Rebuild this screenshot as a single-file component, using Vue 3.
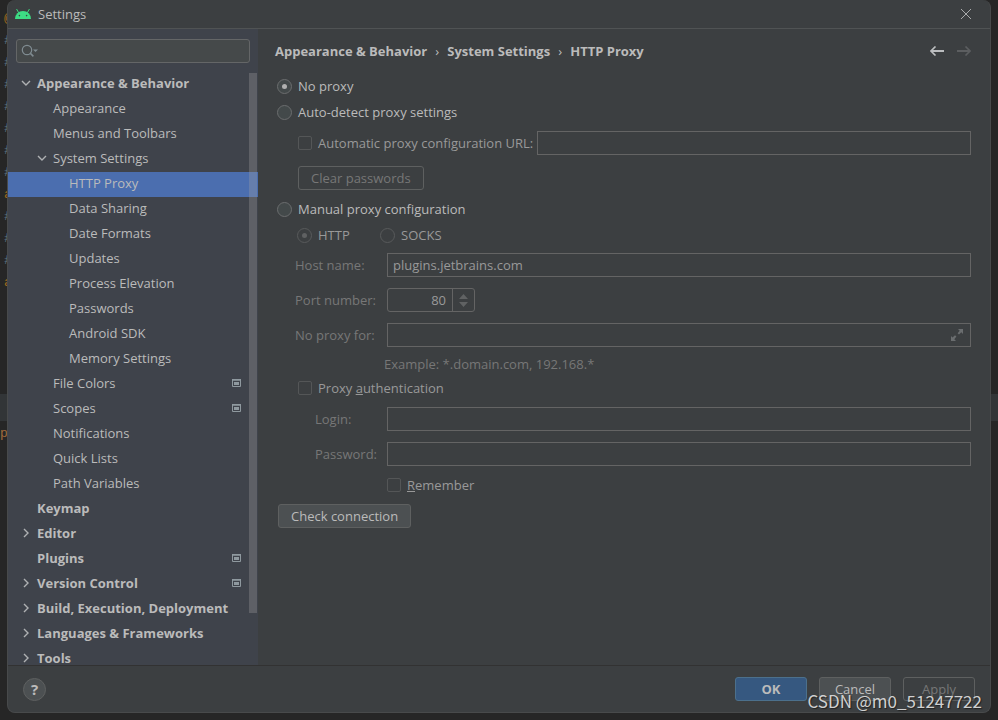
<script setup>
import { ref } from 'vue'

const tree = [
  { label: 'Appearance & Behavior', level: 0, state: 'open' },
  { label: 'Appearance', level: 1 },
  { label: 'Menus and Toolbars', level: 1 },
  { label: 'System Settings', level: 1, state: 'open' },
  { label: 'HTTP Proxy', level: 2, selected: true },
  { label: 'Data Sharing', level: 2 },
  { label: 'Date Formats', level: 2 },
  { label: 'Updates', level: 2 },
  { label: 'Process Elevation', level: 2 },
  { label: 'Passwords', level: 2 },
  { label: 'Android SDK', level: 2 },
  { label: 'Memory Settings', level: 2 },
  { label: 'File Colors', level: 1, project: true },
  { label: 'Scopes', level: 1, project: true },
  { label: 'Notifications', level: 1 },
  { label: 'Quick Lists', level: 1 },
  { label: 'Path Variables', level: 1 },
  { label: 'Keymap', level: 0 },
  { label: 'Editor', level: 0, state: 'closed' },
  { label: 'Plugins', level: 0, project: true },
  { label: 'Version Control', level: 0, state: 'closed', project: true },
  { label: 'Build, Execution, Deployment', level: 0, state: 'closed' },
  { label: 'Languages & Frameworks', level: 0, state: 'closed' },
  { label: 'Tools', level: 0, state: 'closed' }
]

const editorLines = ['@', '#', '#', '#', '#', '#', '#', '#', 'a', '#', '#', '#', 'a']
const mode = ref('none')
const scheme = ref('http')
const host = ref('plugins.jetbrains.com')
const port = ref('80')
</script>

<template>
  <div class="screen">
    <div class="editor" aria-hidden="true">
      <div v-for="(c, i) in editorLines" :key="i" class="line" :class="{ word: c !== '#' }">{{ c }}</div>
      <div class="band"></div>
      <div class="line prompt">pi</div>
    </div>

    <section class="dialog">
      <header class="titlebar">
        <svg class="android" width="18" height="12" viewBox="0 0 18 12">
          <path d="M1 11a8 8 0 0 1 16 0z" fill="#3ddc84" />
          <path d="M4.6 4.6 2.8 1.4M13.4 4.6l1.8-3.2" stroke="#3ddc84" stroke-width="1" stroke-linecap="round" />
          <circle cx="5.4" cy="7.6" r=".8" fill="#3c3f41" /><circle cx="12.6" cy="7.6" r=".8" fill="#3c3f41" />
        </svg>
        <h1>Settings</h1>
        <button class="icon-button" aria-label="Close">
          <svg width="12" height="12" viewBox="0 0 12 12"><path d="M1 1l10 10M11 1L1 11" stroke="#a9abac" stroke-width="1" /></svg>
        </button>
      </header>

      <div class="body">
        <aside class="sidebar">
          <div class="search">
            <svg width="18" height="14" viewBox="0 0 18 14" fill="none">
              <circle cx="6" cy="6" r="4.7" stroke="#7f8b91" stroke-width="1.2" />
              <path d="M9.4 9.4l3 3" stroke="#7f8b91" stroke-width="1.5" />
              <path d="M12 5.5h5L14.500 8z" fill="#7f8b91" />
            </svg>
            <input type="text" aria-label="Search settings" />
          </div>
          <nav class="tree">
            <a
              v-for="item in tree"
              :key="item.label"
              href="#"
              class="node"
              :class="['level-' + item.level, { selected: item.selected }]"
            >
              <span class="arrow">
                <svg v-if="item.state === 'open'" width="10" height="10" viewBox="0 0 10 10" fill="none"><path d="M1 3l4 4 4-4" stroke="#afb1b3" stroke-width="1.4" /></svg>
                <svg v-if="item.state === 'closed'" width="10" height="10" viewBox="0 0 10 10" fill="none"><path d="M3 1l4 4-4 4" stroke="#afb1b3" stroke-width="1.4" /></svg>
              </span>
              <span class="name">{{ item.label }}</span>
              <svg v-if="item.project" width="9" height="8" viewBox="0 0 9 8">
                <path d="M.5 1v6.500h8V1z" fill="none" stroke="#8f999f" />
                <path d="M0 0h9v1.500H0zM2 3h5v3H2z" fill="#8f999f" />
              </svg>
            </a>
            <div class="scroll-thumb"></div>
          </nav>
        </aside>

        <main class="content">
          <div class="heading">
            <h2>Appearance &amp; Behavior</h2><span class="sep">›</span>
            <h2>System Settings</h2><span class="sep">›</span>
            <h2>HTTP Proxy</h2>
            <div class="history">
              <button class="icon-button" aria-label="Back">
                <svg width="14" height="10" viewBox="0 0 14 10" fill="none"><path d="M14 5H2" stroke="#bbbdbf" stroke-width="2" /><path d="M5.500.5L1 5l4.500 4.500" stroke="#bbbdbf" stroke-width="1.600" /></svg>
              </button>
              <button class="icon-button" aria-label="Forward" disabled>
                <svg width="14" height="10" viewBox="0 0 14 10" fill="none"><path d="M0 5h12" stroke="#5c5e60" stroke-width="2" /><path d="M8.500.5L13 5 8.500 9.500" stroke="#5c5e60" stroke-width="1.600" /></svg>
              </button>
            </div>
          </div>

          <form class="form" @submit.prevent>
            <label class="choice"><input v-model="mode" type="radio" name="mode" value="none" />No proxy</label>
            <label class="choice"><input v-model="mode" type="radio" name="mode" value="auto" />Auto-detect proxy settings</label>
            <div class="field nested after-choice">
              <label class="option url-option"><input type="checkbox" disabled />Automatic proxy configuration URL:</label>
              <input type="text" class="box" aria-label="Configuration URL" disabled />
            </div>
            <div class="field nested">
              <button class="button" disabled>Clear passwords</button>
            </div>
            <label class="choice after-field"><input v-model="mode" type="radio" name="mode" value="manual" />Manual proxy configuration</label>
            <div class="schemes">
              <label class="choice"><input v-model="scheme" type="radio" name="scheme" value="http" disabled />HTTP</label>
              <label class="choice"><input v-model="scheme" type="radio" name="scheme" value="socks" disabled />SOCKS</label>
            </div>
            <div class="field after-choice">
              <label class="caption" for="host">Host name:</label>
              <input id="host" v-model="host" type="text" class="box" disabled />
            </div>
            <div class="field">
              <label class="caption" for="port">Port number:</label>
              <div class="spinner">
                <input id="port" v-model="port" type="text" disabled />
                <span class="steps">
                  <svg width="9" height="13" viewBox="0 0 9 13"><path d="M0 5l4.500-5L9 5zM0 8h9l-4.500 5z" fill="#606263" /></svg>
                </span>
              </div>
            </div>
            <div class="field">
              <label class="caption" for="bypass">No proxy for:</label>
              <div class="box expandable">
                <input id="bypass" type="text" disabled />
                <svg width="12" height="12" viewBox="0 0 12 12"><path d="M7 0h5v5l-1.700-1.700L8 5.600 6.600 4.200 8.700 1.700zM0 7l1.500 1.500L4 6.200 5.400 7.600 3.300 10.300 5 12H0z" fill="#6a6d6f" /></svg>
              </div>
            </div>
            <p class="hint">Example: *.domain.com, 192.168.*</p>
            <div class="nested auth">
              <label class="option"><input type="checkbox" disabled /><span>Proxy <u>a</u>uthentication</span></label>
            </div>
            <div class="field deep after-field">
              <label class="caption" for="login">Login:</label>
              <input id="login" type="text" class="box" disabled />
            </div>
            <div class="field deep">
              <label class="caption" for="password">Password:</label>
              <input id="password" type="password" class="box" disabled />
            </div>
            <div class="remember after-field">
              <label class="option"><input type="checkbox" disabled /><span><u>R</u>emember</span></label>
            </div>
            <div class="check after-field"><button class="button">Check connection</button></div>
          </form>
        </main>
      </div>

      <footer class="footer">
        <button class="help" aria-label="Help">?</button>
        <button class="button primary">OK</button>
        <button class="button">Cancel</button>
        <button class="button" disabled>Apply</button>
      </footer>
    </section>
    <div class="watermark">CSDN @m0_51247722</div>
  </div>
</template>

<style>
body {
  background: #262626;
}
</style>

<style scoped>
* {
  box-sizing: border-box;
}
.screen {
  position: relative;
  display: flex;
  height: 100vh;
  min-height: 560px;
  padding: 0 7px 7px;
  overflow: hidden;
  background: #262626;
  color: #bbbbbb;
  font: 13px/18px "Open Sans", "Noto Sans", sans-serif;
}
.editor {
  position: absolute;
  inset: 0;
  padding-top: 8px;
  font: 13px/22px "Liberation Mono", monospace;
  color: #5f7381;
}
.line {
  padding-left: 4px;
}
.line.word {
  color: #a06c1f;
}
.band {
  height: 27px;
  margin-top: 100px;
  background: #323537;
}
.line.prompt {
  padding-left: 0;
  color: #a06c3c;
  line-height: 26px;
}
.dialog {
  position: relative;
  display: flex;
  flex: 1;
  flex-direction: column;
  min-width: 0;
  border: 1px solid #484a4b;
  border-top: 0;
  border-radius: 8px;
  overflow: hidden;
  background: #3c3f41;
}
h1,
h2,
p {
  margin: 0;
  font-size: 13px;
  font-weight: 400;
}
input,
button {
  margin: 0;
  padding: 0;
  border: 0;
  background: none;
  color: inherit;
  font: inherit;
}
input[type="text"],
input[type="password"] {
  min-width: 0;
  outline: 0;
}
.titlebar {
  display: flex;
  align-items: center;
  flex: none;
  gap: 6px;
  height: 29px;
  padding: 0 18px 0 6px;
  border-bottom: 1px solid #505354;
}
.titlebar h1 {
  flex: 1;
}
.icon-button {
  display: flex;
}
.body {
  display: flex;
  flex: 1;
  min-height: 0;
}
.sidebar {
  display: flex;
  flex: none;
  flex-direction: column;
  width: 250px;
  padding-top: 10px;
  background: #3f434b;
}
.search {
  display: flex;
  align-items: center;
  flex: none;
  height: 24px;
  margin: 0 8px 9px;
  padding: 0 4px;
  border: 1px solid #646667;
  border-radius: 3px;
  background: #45494a;
}
.search input {
  flex: 1;
}
.tree {
  position: relative;
  flex: 1;
  min-height: 0;
  overflow: hidden;
}
.node {
  display: flex;
  align-items: center;
  height: 25px;
  padding-right: 17px;
  padding-bottom: 3px;
  color: inherit;
  text-decoration: none;
}
.level-0 {
  padding-left: 13px;
  font-weight: 700;
}
.level-1 {
  padding-left: 29px;
}
.level-2 {
  padding-left: 45px;
}
.selected {
  background: #4b6eaf;
}
.arrow {
  display: flex;
  flex: none;
  width: 16px;
}
.name {
  flex: 1;
  white-space: nowrap;
}
.scroll-thumb {
  position: absolute;
  top: 1px;
  right: 1px;
  width: 8px;
  height: 91%;
  background: rgba(166, 166, 166, 0.3);
}
.content {
  flex: 1;
  min-width: 0;
  padding: 0 19px 0 17px;
}
.heading {
  display: flex;
  align-items: center;
  height: 44px;
}
h2 {
  font-weight: 700;
}
.sep {
  width: 20px;
  text-align: center;
}
.history {
  display: flex;
  gap: 13px;
  margin-left: auto;
}
.form {
  display: flex;
  flex-direction: column;
}
.choice,
.option {
  display: flex;
  align-items: center;
  gap: 6px;
  height: 26px;
  white-space: nowrap;
}
.choice {
  padding-left: 2px;
}
.option {
  color: #999999;
}
input[type="radio"] {
  display: grid;
  place-items: center;
  width: 15px;
  height: 15px;
  border: 1px solid #6b6d6e;
  border-radius: 50%;
  background: #43494a;
  appearance: none;
}
input[type="radio"]:checked::before {
  width: 5px;
  height: 5px;
  border-radius: 50%;
  background: #b0b0b0;
  content: "";
}
input[type="radio"]:disabled {
  border-color: #585a5b;
  background: none;
}
input[type="radio"]:disabled:checked::before {
  background: #5f6162;
}
input[type="checkbox"] {
  width: 14px;
  height: 14px;
  border: 1px solid #545657;
  border-radius: 2px;
  appearance: none;
}
.field {
  display: flex;
  align-items: center;
  height: 24px;
  margin-top: 11px;
  padding-left: 20px;
}
.field.nested,
.nested {
  padding-left: 23px;
}
.field.deep {
  padding-left: 40px;
}
.after-choice,
.after-field {
  margin-top: 6px;
}
.url-option {
  width: 239px;
}
.caption {
  flex: none;
  width: 92px;
  color: #777777;
}
.deep .caption {
  width: 72px;
}
.box {
  flex: 1;
  height: 24px;
  padding: 0 5px;
  border: 1px solid #646464;
  color: #999999;
}
input.box {
  border: 1px solid #646464;
  padding: 0 5px;
}
.expandable {
  display: flex;
  align-items: center;
  padding-right: 7px;
}
.expandable input {
  flex: 1;
}
.schemes {
  display: grid;
  grid-template-columns: 83px 83px;
  align-items: center;
  height: 25px;
  padding-left: 20px;
  color: #999999;
}
.spinner {
  display: flex;
  width: 88px;
  height: 24px;
  border: 1px solid #646464;
  border-radius: 3px;
  color: #999999;
}
.spinner input {
  flex: 1;
  padding-right: 6px;
  text-align: right;
}
.steps {
  display: grid;
  place-items: center;
  width: 22px;
  border-left: 1px solid #646464;
}
.hint {
  margin-top: 6px;
  padding-left: 109px;
  color: #777777;
  line-height: 22px;
}
.remember {
  padding-left: 112px;
}
.check {
  padding-left: 3px;
}
.button {
  height: 24px;
  min-width: 72px;
  padding: 0 12px;
  border: 1px solid #5e6060;
  border-radius: 3px;
  background: #4c5052;
  line-height: 22px;
  white-space: nowrap;
}
.button:disabled {
  background: none;
  color: #777777;
}
.primary {
  border-color: #4c708c;
  background: #365880;
  font-weight: 700;
}
.footer {
  display: flex;
  align-items: center;
  flex: none;
  gap: 12px;
  height: 47px;
  padding: 0 15px;
  border-top: 1px solid #323232;
}
.help {
  width: 23px;
  height: 23px;
  margin-right: auto;
  border: 1px solid #5e6060;
  border-radius: 50%;
  background: #4c5052;
  font: 700 15px/21px "Noto Sans", sans-serif;
}
.watermark {
  position: absolute;
  right: 16px;
  bottom: 7px;
  color: #d0d0d0;
  font: 17px/24px "Noto Sans CJK SC", sans-serif;
  text-shadow: 1px 1px 1px #222222;
}
</style>
